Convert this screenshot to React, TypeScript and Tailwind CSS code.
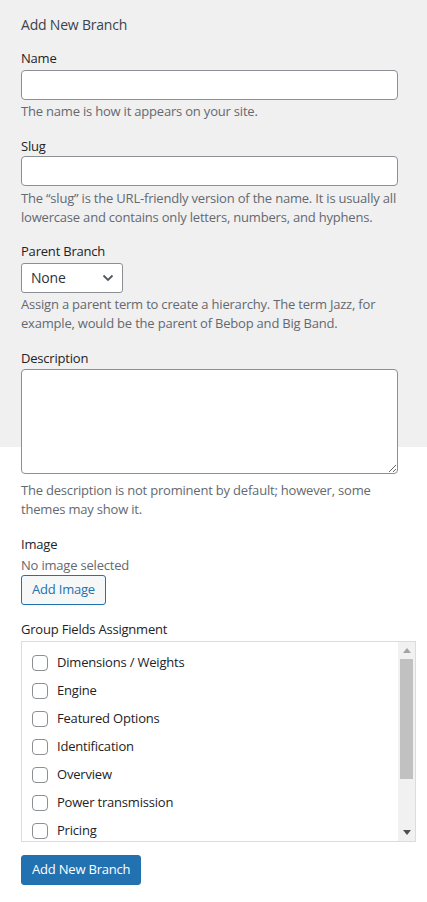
import React from 'react';

const groupFields = [
  'Dimensions / Weights',
  'Engine',
  'Featured Options',
  'Identification',
  'Overview',
  'Power transmission',
  'Pricing',
];

const Label: React.FC<{ children: React.ReactNode; className?: string }> = ({ children, className = '' }) => (
  <label className={`block text-[13px] leading-[20px] text-[#1d2327] ${className}`}>{children}</label>
);

const Hint: React.FC<{ children: React.ReactNode; className?: string }> = ({ children, className = '' }) => (
  <p className={`text-[13px] leading-[19.5px] text-[#646970] ${className}`}>{children}</p>
);

const App: React.FC = () => {
  return (
    <div className="min-h-[902px] w-full bg-[linear-gradient(#f0f0f1_447px,#ffffff_447px)] font-['Open_Sans','Noto_Sans',sans-serif] tracking-[-0.2px]">
      <form className="pl-[21px] pr-[29px] pt-[15px] pb-[16px]">
        <h2 className="text-[14px] leading-[20px] text-[#3c434a]">Add New Branch</h2>

        <Label className="mt-[13px]">Name</Label>
        <input type="text" className="mt-[2px] block h-[30px] w-full rounded-[4px] border border-[#8c8f94] bg-white px-2 text-[14px]" />
        <Hint className="mt-[2px]">The name is how it appears on your site.</Hint>

        <Label className="mt-[14px]">Slug</Label>
        <input type="text" className="block h-[30px] w-full rounded-[4px] border border-[#8c8f94] bg-white px-2 text-[14px]" />
        <Hint className="mt-[3px]">
          The “slug” is the URL-friendly version of the name. It is usually all lowercase and contains only letters, numbers, and hyphens.
        </Hint>

        <Label className="mt-[13px]">Parent Branch</Label>
        <div className="mt-[2px] flex h-[30px] w-[102px] items-center justify-between rounded-[3px] border border-[#8c8f94] bg-white pl-[9px] pr-[8px]">
          <span className="text-[14px] text-[#2c3338]">None</span>
          <svg width="12" height="8" viewBox="0 0 12 8" fill="none">
            <path d="M1.5 1.5 6 6 10.5 1.5" stroke="#50575e" strokeWidth="1.8" />
          </svg>
        </div>
        <Hint className="mt-[2px]">
          Assign a parent term to create a hierarchy. The term Jazz, for example, would be the parent of Bebop and Big Band.
        </Hint>

        <Label className="mt-[14px]">Description</Label>
        <textarea className="mt-[1px] block h-[105px] w-full rounded-[4px] border border-[#8c8f94] bg-white px-2 py-1 text-[14px]" />
        <Hint className="mt-[7px]">
          The description is not prominent by default; however, some themes may show it.
        </Hint>

        <Label className="mt-[14px]">Image</Label>
        <p className="mt-[1px] text-[13px] leading-[20px] text-[#646970]">No image selected</p>
        <button
          type="button"
          className="flex h-[30px] items-center rounded-[3px] border border-[#2271b1] bg-[#f6f7f7] px-[10px] text-[13px] text-[#2271b1]"
        >
          Add Image
        </button>

        <Label className="mt-[14px]">Group Fields Assignment</Label>
        <div className="mt-[2px] mr-[-18px] flex h-[201px] border border-[#dcdcde] bg-white">
          <ul className="flex-1 overflow-hidden pt-[7px] pl-[10px]">
            {groupFields.map((field) => (
              <li key={field} className="flex h-[28px] items-center gap-[9px]">
                <span className="h-[16px] w-[16px] shrink-0 rounded-[4px] border border-[#8c8f94] bg-white" />
                <span className="text-[13px] text-[#1d2327]">{field}</span>
              </li>
            ))}
          </ul>
          <div className="flex w-[17px] flex-col bg-[#f1f1f1]">
            <div className="flex h-[17px] items-center justify-center">
              <svg width="8" height="5" viewBox="0 0 8 5">
                <path d="M0 5 4 0 8 5Z" fill="#a3a3a3" />
              </svg>
            </div>
            <div className="mx-[2px] h-[120px] bg-[#c1c1c1]" />
            <div className="flex-1" />
            <div className="flex h-[17px] items-center justify-center">
              <svg width="8" height="5" viewBox="0 0 8 5">
                <path d="M0 0 8 0 4 5Z" fill="#505050" />
              </svg>
            </div>
          </div>
        </div>

        <button
          type="button"
          className="mt-[13px] flex h-[30px] items-center rounded-[3px] border border-[#2271b1] bg-[#2271b1] px-[10px] text-[13px] text-white"
        >
          Add New Branch
        </button>
      </form>
    </div>
  );
};

export default App;
